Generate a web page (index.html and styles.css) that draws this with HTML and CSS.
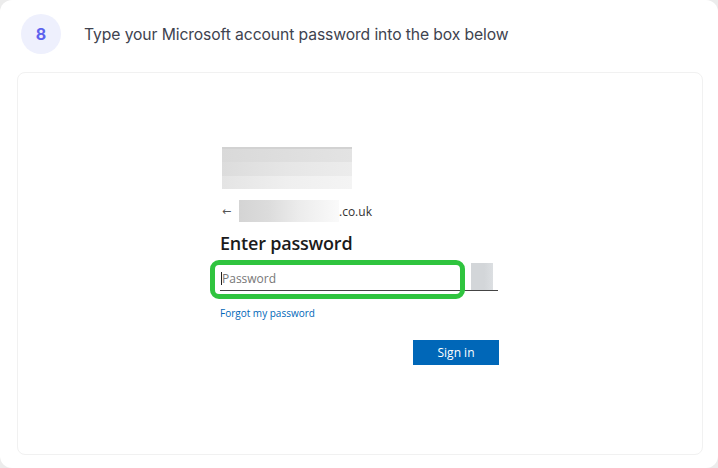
FILE: index.html
```html
<!DOCTYPE html>
<html>
<head>
<meta charset="utf-8">
<link rel="stylesheet" href="styles.css">
</head>
<body>
<div class="card">
  <div class="step">
    <div class="badge">8</div>
    <div class="title">Type your Microsoft account password into the box below</div>
  </div>
  <div class="shot">
    <div class="ms">
      <div class="logo-blur">
        <div class="row r1"></div>
        <div class="row r2"></div>
        <div class="row r3"></div>
      </div>
      <div class="ident">
        <span class="arrow">←</span>
        <span class="email-blur"></span>
        <span class="domain">.co.uk</span>
      </div>
      <div class="heading">Enter password</div>
      <div class="field-row">
        <div class="field">
          <span class="caret"></span><span class="ph">Password</span>
        </div>
        <div class="eye"></div>
      </div>
      <div class="forgot">Forgot my password</div>
      <div class="actions">
        <div class="btn">Sign in</div>
      </div>
    </div>
  </div>
</div>
</body>
</html>
```
FILE: styles.css
```css
html, body {
  margin: 0;
  padding: 0;
  background: #ececec;
}
body {
  width: 718px;
  height: 468px;
  overflow: hidden;
}
.card {
  width: 718px;
  height: 468px;
  box-sizing: border-box;
  background: #ffffff;
  border-radius: 12px;
  padding: 14px 15px 13px 17px;
  display: flex;
  flex-direction: column;
}
.step {
  display: flex;
  align-items: center;
  padding-left: 4px;
  height: 40px;
}
.badge {
  width: 40px;
  height: 40px;
  border-radius: 50%;
  background: #eef0fd;
  color: #5d62ee;
  font-family: Inter, "Liberation Sans", sans-serif;
  font-weight: 700;
  font-size: 16px;
  display: flex;
  align-items: center;
  justify-content: center;
}
.title {
  margin-left: 23px;
  font-family: Inter, "Liberation Sans", sans-serif;
  font-size: 15.7px;
  color: #40434f;
  letter-spacing: -0.1px;
}
.shot {
  margin-top: 18px;
  flex: 1;
  border: 1px solid #f1f1f1;
  border-radius: 8px;
  background: #ffffff;
  position: relative;
}
.ms {
  position: absolute;
  left: 192px;
  top: 74px;
  width: 300px;
  font-family: "Open Sans", "Liberation Sans", sans-serif;
}
.logo-blur {
  margin-left: 12px;
  width: 130px;
  height: 42px;
  display: flex;
  flex-direction: column;
  border-top: 2px solid #d2d2d2;
  box-sizing: border-box;
}
.row { flex: 1; }
.r1 { background: linear-gradient(90deg, #d9d9d9, #dedede 50%, #e3e3e3); }
.r2 { background: linear-gradient(90deg, #dcdcdc, #e6e6e6 50%, #ececec); }
.r3 { background: linear-gradient(90deg, #e4e4e4, #efefef 50%, #f4f4f4); }
.ident {
  margin-top: 11px;
  margin-left: 12px;
  display: flex;
  align-items: center;
  height: 22px;
}
.arrow {
  font-size: 11px;
  color: #555;
  width: 17px;
  font-family: "DejaVu Sans", sans-serif;
}
.email-blur {
  width: 100px;
  height: 22px;
  background: linear-gradient(90deg, #d4d4d4, #dcdcdc 30%, #ececec 60%, #fafafa);
}
.domain {
  font-size: 12px;
  color: #333;
}
.heading {
  margin-top: 10px;
  margin-left: 10px;
  font-size: 18px;
  font-weight: 600;
  color: #1b1b1b;
  line-height: 22px;
  letter-spacing: -0.2px;
}
.field-row {
  margin-top: 6px;
  display: flex;
  align-items: flex-start;
  position: relative;
  height: 39px;
}
.field-row::after {
  content: "";
  position: absolute;
  left: 10px;
  top: 30px;
  width: 278px;
  height: 1px;
  background: #444;
}
.field {
  width: 255px;
  height: 39px;
  box-sizing: border-box;
  border: 5px solid #2fc43e;
  border-radius: 9px;
  display: flex;
  align-items: center;
  padding-left: 6px;
  padding-bottom: 3px;
  font-size: 12px;
  color: #777;
  position: relative;
  z-index: 1;
}
.caret {
  width: 1px;
  height: 13px;
  background: #222;
}
.eye {
  margin-left: 6px;
  margin-top: 3px;
  width: 22px;
  height: 27px;
  background: linear-gradient(90deg, #d3d6d9 60%, #dcdfe2);
}
.forgot {
  margin-top: 7px;
  margin-left: 10px;
  font-size: 10px;
  color: #0067b8;
}
.actions {
  margin-top: 20px;
  display: flex;
  justify-content: flex-end;
  width: 289px;
}
.btn {
  width: 86px;
  height: 25px;
  background: #0067b8;
  color: #fff;
  font-size: 12px;
  display: flex;
  align-items: center;
  justify-content: center;
}
```
